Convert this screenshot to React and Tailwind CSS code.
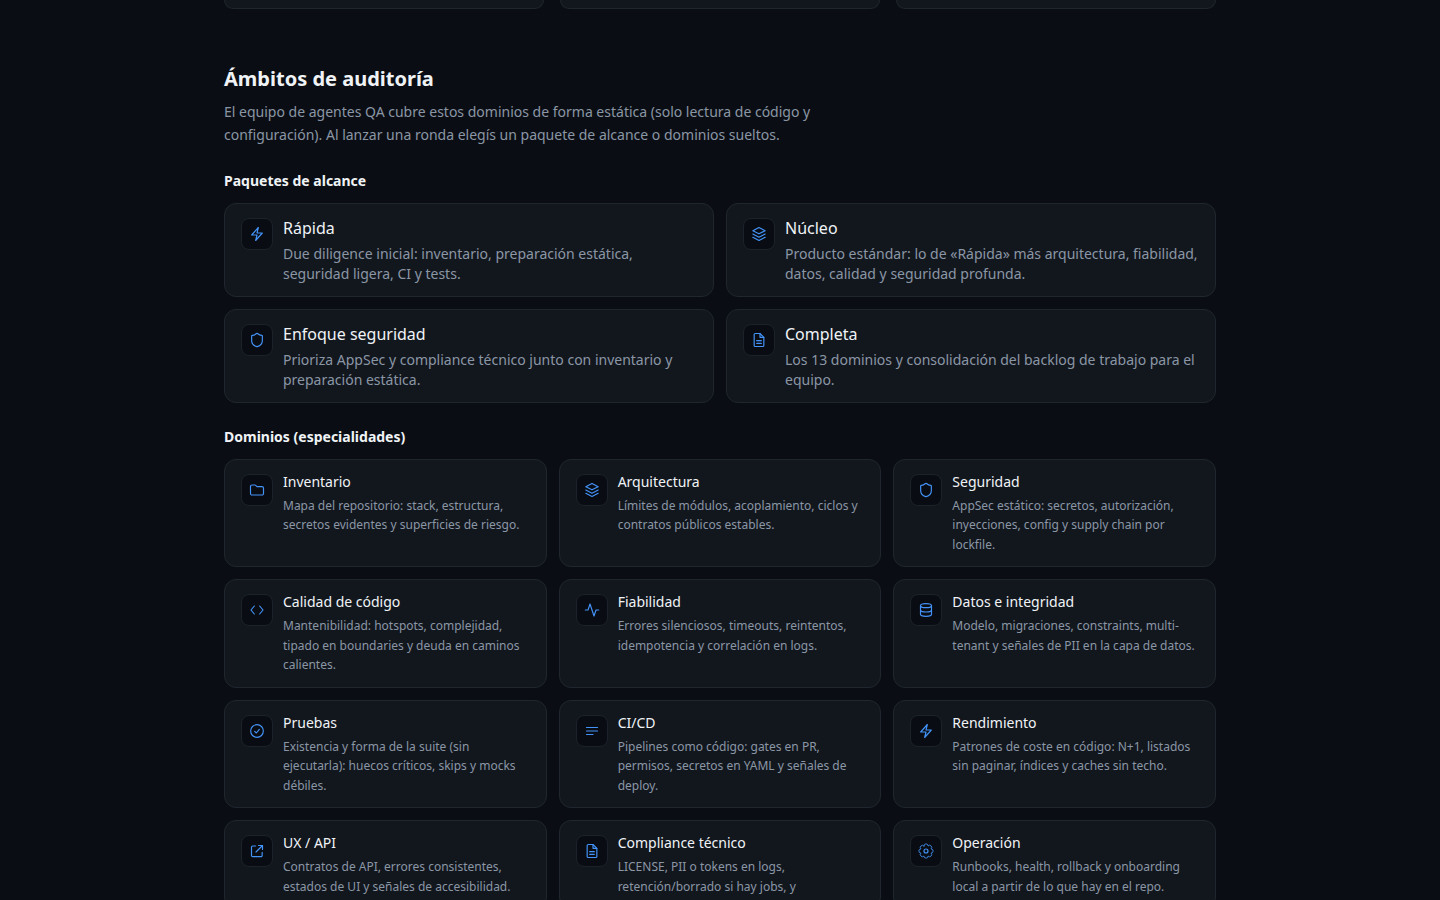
const icons = {
  zap: <path d="m4 13.5 10-11.25-2 8.25h8L10 21.75l2-8.25H4z" />,
  layers: (
    <>
      <path d="m12 2.25 9.25 4.75L12 11.75 2.75 7 12 2.25z" />
      <path d="M2.75 12 12 16.75 21.25 12" />
      <path d="M2.75 17 12 21.75 21.25 17" />
    </>
  ),
  shield: (
    <path d="M20 13c0 5-3.5 7.5-7.66 8.95a1 1 0 0 1-.67-.01C7.5 20.5 4 18 4 13V6a1 1 0 0 1 1-1c2 0 4.5-1.2 6.24-2.72a1.17 1.17 0 0 1 1.52 0C14.51 3.81 17 5 19 5a1 1 0 0 1 1 1z" />
  ),
  file: (
    <>
      <path d="M13.5 2.25H6.4c-.9 0-1.65.75-1.65 1.65v16.2c0 .9.75 1.65 1.65 1.65h11.2c.9 0 1.65-.75 1.65-1.65V8l-5.75-5.75z" />
      <path d="M13.5 2.25V8h5.75M8.5 13h7M8.5 17h7" />
    </>
  ),
  folder: (
    <path d="M2.25 6.75A2.25 2.25 0 0 1 4.5 4.5h4.4c.4 0 .8.16 1.06.44l2.1 2.12h7.44a2.25 2.25 0 0 1 2.25 2.25v7.94a2.25 2.25 0 0 1-2.25 2.25h-15a2.25 2.25 0 0 1-2.25-2.25V6.75z" />
  ),
  code: <path d="m16 18 5-6-5-6M8 6l-5 6 5 6" />,
  activity: <path d="M22 12h-4l-3 9L9 3l-3 9H2" />,
  database: (
    <>
      <ellipse cx="12" cy="5.5" rx="8.25" ry="3" />
      <path d="M20.25 12c0 1.66-3.7 3-8.25 3s-8.25-1.34-8.25-3" />
      <path d="M3.75 5.5v13c0 1.66 3.7 3 8.25 3s8.25-1.34 8.25-3v-13" />
    </>
  ),
  check: <path d="m8.5 12.5 2.5 2.5 4.5-5.5M21.5 12a9.5 9.5 0 1 1-19 0 9.5 9.5 0 0 1 19 0z" />,
  lines: <path d="M3.75 6.75h16.5M3.75 12h16.5M3.75 17.25h9.75" />,
  external: (
    <>
      <path d="M10 4.5H5.5A1.75 1.75 0 0 0 3.75 6.25v12.5c0 .97.78 1.75 1.75 1.75H18a1.75 1.75 0 0 0 1.75-1.75V14" />
      <path d="M14.25 3.75h6v6M10.5 13.5l9.75-9.75" />
    </>
  ),
  settings: (
    <>
      <circle cx="12" cy="12" r="3" />
      <path
        strokeWidth="1.25"
        d="M8.9 4.4a3.1 3.1 0 0 1 6.2 0 3.1 3.1 0 0 1 4.5 4.5 3.1 3.1 0 0 1 0 6.2 3.1 3.1 0 0 1-4.5 4.5 3.1 3.1 0 0 1-6.2 0 3.1 3.1 0 0 1-4.5-4.5 3.1 3.1 0 0 1 0-6.2 3.1 3.1 0 0 1 4.5-4.5z"
      />
    </>
  ),
};

const packages = [
  {
    icon: 'zap',
    title: 'Rápida',
    text: 'Due diligence inicial: inventario, preparación estática, seguridad ligera, CI y tests.',
  },
  {
    icon: 'layers',
    title: 'Núcleo',
    text: 'Producto estándar: lo de «Rápida» más arquitectura, fiabilidad, datos, calidad y seguridad profunda.',
  },
  {
    icon: 'shield',
    title: 'Enfoque seguridad',
    text: 'Prioriza AppSec y compliance técnico junto con inventario y preparación estática.',
  },
  {
    icon: 'file',
    title: 'Completa',
    text: 'Los 13 dominios y consolidación del backlog de trabajo para el equipo.',
  },
];

const domains = [
  { icon: 'folder', title: 'Inventario', text: 'Mapa del repositorio: stack, estructura, secretos evidentes y superficies de riesgo.' },
  { icon: 'layers', title: 'Arquitectura', text: 'Límites de módulos, acoplamiento, ciclos y contratos públicos estables.' },
  { icon: 'shield', title: 'Seguridad', text: 'AppSec estático: secretos, autorización, inyecciones, config y supply chain por lockfile.' },
  { icon: 'code', title: 'Calidad de código', text: 'Mantenibilidad: hotspots, complejidad, tipado en boundaries y deuda en caminos calientes.' },
  { icon: 'activity', title: 'Fiabilidad', text: 'Errores silenciosos, timeouts, reintentos, idempotencia y correlación en logs.' },
  { icon: 'database', title: 'Datos e integridad', text: 'Modelo, migraciones, constraints, multi-tenant y señales de PII en la capa de datos.' },
  { icon: 'check', title: 'Pruebas', text: 'Existencia y forma de la suite (sin ejecutarla): huecos críticos, skips y mocks débiles.' },
  { icon: 'lines', title: 'CI/CD', text: 'Pipelines como código: gates en PR, permisos, secretos en YAML y señales de deploy.' },
  { icon: 'zap', title: 'Rendimiento', text: 'Patrones de coste en código: N+1, listados sin paginar, índices y caches sin techo.' },
  { icon: 'external', title: 'UX / API', text: 'Contratos de API, errores consistentes, estados de UI y señales de accesibilidad.' },
  { icon: 'file', title: 'Compliance técnico', text: 'LICENSE, PII o tokens en logs, retención/borrado si hay jobs, y' },
  { icon: 'settings', title: 'Operación', text: 'Runbooks, health, rollback y onboarding local a partir de lo que hay en el repo.' },
];

const IconBox = ({ name }) => (
  <span className="mt-0.5 flex h-8 w-8 shrink-0 items-center justify-center rounded-lg border border-[#1c222a] bg-[#090d13] text-[#4493f8]">
    <svg
      className="h-4 w-4"
      viewBox="0 0 24 24"
      fill="none"
      stroke="currentColor"
      strokeWidth="1.75"
      strokeLinecap="round"
      strokeLinejoin="round"
      aria-hidden="true"
    >
      {icons[name]}
    </svg>
  </span>
);

const PackageCard = ({ item }) => (
  <li className="flex gap-2.5 rounded-xl border border-[#20262d] bg-[#12171e] px-4 py-3">
    <IconBox name={item.icon} />
    <div className="min-w-0">
      <h4 className="text-base text-[#f0f3f6]">{item.title}</h4>
      <p className="mt-1 text-sm text-[#8b96a5]">{item.text}</p>
    </div>
  </li>
);

const DomainCard = ({ item }) => (
  <li className="flex gap-2.5 rounded-xl border border-[#20262d] bg-[#12171e] px-4 py-3">
    <IconBox name={item.icon} />
    <div className="min-w-0">
      <h4 className="text-sm text-[#f0f3f6]">{item.title}</h4>
      <p className="mt-1 text-xs leading-relaxed text-[#8b96a5]">{item.text}</p>
    </div>
  </li>
);

const App = () => {
  return (
    <div className="h-screen overflow-hidden bg-[#0a0e14] font-['Noto_Sans',sans-serif] text-[#f0f3f6]">
      <main className="mx-auto max-w-5xl px-4">
        {/* Lower edge of the previous section's cards */}
        <div className="grid grid-cols-3 gap-4">
          <div className="rounded-b-xl border border-t-0 border-[#20262d] bg-[#12171e] pt-2" />
          <div className="rounded-b-xl border border-t-0 border-[#20262d] bg-[#12171e] pt-2" />
          <div className="rounded-b-xl border border-t-0 border-[#20262d] bg-[#12171e] pt-2" />
        </div>

        <section className="mt-14">
          <h2 className="text-xl font-bold">Ámbitos de auditoría</h2>
          <p className="mt-2 max-w-2xl text-sm leading-relaxed text-[#8b96a5]">
            El equipo de agentes QA cubre estos dominios de forma estática (solo lectura de código y
            configuración). Al lanzar una ronda elegís un paquete de alcance o dominios sueltos.
          </p>

          <h3 className="mt-6 text-sm font-bold">Paquetes de alcance</h3>
          <ul className="mt-3 grid grid-cols-2 gap-3">
            {packages.map((item) => (
              <PackageCard key={item.title} item={item} />
            ))}
          </ul>

          <h3 className="mt-6 text-sm font-bold">Dominios (especialidades)</h3>
          <ul className="mt-3 grid grid-cols-3 gap-3">
            {domains.map((item) => (
              <DomainCard key={item.title} item={item} />
            ))}
          </ul>
        </section>
      </main>
    </div>
  );
};

export default App;
